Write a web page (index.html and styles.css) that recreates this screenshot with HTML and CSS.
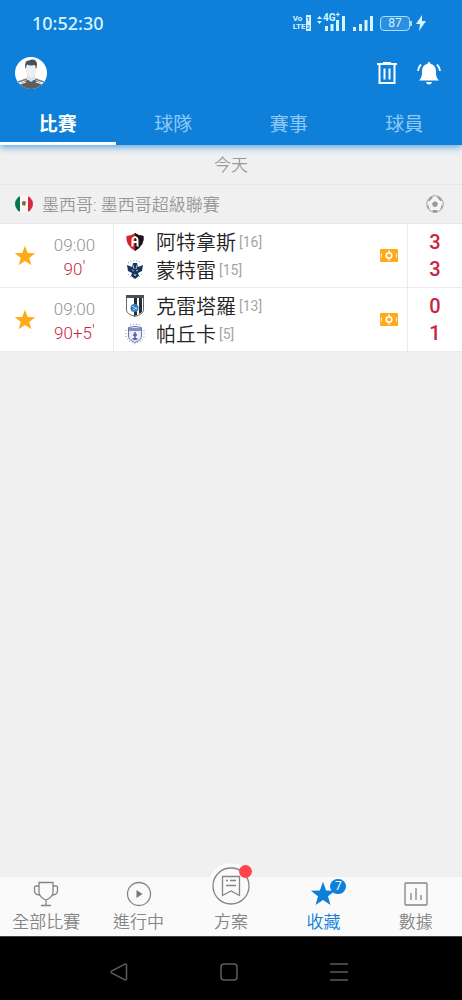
FILE: index.html
```html
<!DOCTYPE html>
<html lang="zh-Hant">

<head>
  <meta charset="utf-8">
  <meta name="viewport" content="width=device-width, initial-scale=1">
  <title>收藏</title>
  <link rel="stylesheet" href="styles.css">
</head>

<body>

  <!-- Shapes used more than once -->
  <svg class="defs" width="0" height="0">
    <symbol id="star" viewBox="0 0 24 24">
      <path d="M12 0.8l2.9 7.9 8.3.3-6.6 5.1 2.3 8.1L12 17.5l-6.9 4.7 2.3-8.1L.8 9l8.3-.3z" fill="currentColor" />
    </symbol>
    <symbol id="pitch" viewBox="0 0 18 13">
      <rect width="18" height="13" rx="1" fill="#ffa91c" />
      <path d="M1.500 4.500v4M16.500 4.500v4" fill="none" stroke="#fff" opacity=".8" />
      <circle cx="9" cy="6.500" r="2.800" fill="none" stroke="#fff" stroke-width="1.600" />
      <path d="M9 1v4M9 8v4" stroke="#fff" stroke-width="1" />
    </symbol>
  </svg>

  <header class="header">
    <div class="status-bar">
      <span class="clock">10:52:30</span>
      <div class="status-icons">
        <span class="volte"><span>Vo<i>1</i></span><span>LTE<i>2</i></span></span>
        <span class="network">
          <svg width="29" height="16" viewBox="0 0 29 16">
            <path d="M0 4l2.500-3L5 4zM0 6l2.500 3L5 6z" fill="#d7f3ff" />
            <path d="M8 11h3v5H8zM13.500 9h3v7h-3zM19 5h3v11h-3zM25 1h3v15h-3z" fill="#d7f3ff" />
          </svg>
          <span class="network-type">4G<sup>+</sup></span>
        </span>
        <svg width="22" height="16" viewBox="0 0 22 16">
          <path d="M1 12h3v4H1zM7 9h3v7H7zM12.500 5h3v11h-3zM18 1h3v15h-3z" fill="#d7f3ff" />
        </svg>
        <span class="battery">87</span>
        <svg width="10" height="16" viewBox="0 0 10 16">
          <path d="M6 0L0 9h4l-1 7 7-10H6z" fill="#d7f3ff" />
        </svg>
      </div>
    </div>

    <div class="toolbar">
      <button class="icon-button" aria-label="個人資料">
        <svg width="32" height="32" viewBox="0 0 32 32">
          <clipPath id="face"><circle cx="16" cy="16" r="16" /></clipPath>
          <g clip-path="url(#face)">
            <rect width="32" height="32" fill="#fff" />
            <path d="M3 28c3-3 6-3 9-5h8c3 2 6 2 9 5v5H3z" fill="#5d5f63" />
            <path d="M3 25l9-3M29 25l-9-3" stroke="#777a7e" stroke-width="1.500" />
            <path d="M5 27l6-2M27 27l-6-2" stroke="#f4f4f4" stroke-width="1.200" />
            <path d="M12 16h8v6l-4 3-4-3z" fill="#dfe1e3" />
            <path d="M11 8h10v6q-.5 5-5 7-4.500-2-5-7z" fill="#edf0f2" />
            <path d="M10.500 12C9.500 6 11 3 14 3.500 18 1 22 3 22 7q0 3-1 5l-1-4q-5 1-8-.5z" fill="#46515d" />
          </g>
        </svg>
      </button>
      <div class="toolbar-actions">
        <button class="icon-button" aria-label="刪除">
          <svg width="22" height="24" viewBox="0 0 22 24" fill="none" stroke="#fff" stroke-width="2">
            <path d="M1 3h20M7 2h8M3.500 3v19h15V3M8.500 7.500v11M13.500 7.500v11" />
          </svg>
        </button>
        <button class="icon-button" aria-label="通知">
          <svg width="24" height="24" viewBox="0 0 24 24">
            <path d="M12 1q1.500 0 1.500 2c4 .7 5.500 3.500 5.500 8 0 4 .5 6 3 8.500H2c2.500-2.500 3-4.500 3-8.500 0-4.500 1.500-7.300 5.500-8Q10.500 1 12 1zM9 21h6q-.5 2.500-3 2.500T9 21z" fill="#fff" />
            <path d="M4 3.500Q1.500 6 1 10M20 3.500Q22.500 6 23 10" fill="none" stroke="#fff" stroke-width="1.800" />
          </svg>
        </button>
      </div>
    </div>

    <nav class="tabs">
      <a class="tab active" href="#">比賽</a>
      <a class="tab" href="#">球隊</a>
      <a class="tab" href="#">賽事</a>
      <a class="tab" href="#">球員</a>
    </nav>
  </header>

  <main class="content">
    <h2 class="day">今天</h2>

    <div class="league">
      <svg width="18" height="18" viewBox="0 0 18 18">
        <clipPath id="flag"><circle cx="9" cy="9" r="9" /></clipPath>
        <g clip-path="url(#flag)">
          <rect width="18" height="18" fill="#f7f7f5" />
          <rect width="5" height="18" fill="#087452" />
          <rect x="13" width="5" height="18" fill="#d72840" />
        </g>
        <path d="M7 7q2-2 4 0l-.5 3L9 11l-2-1.500z" fill="#8a6a47" />
      </svg>
      <h3 class="league-name">墨西哥: 墨西哥超級聯賽</h3>
      <svg width="18" height="18" viewBox="0 0 18 18">
        <circle cx="9" cy="9" r="8.300" fill="#f4f4f4" stroke="#a5a5a5" />
        <path d="M9 6l3 2.200-1.200 3.500H7.200L6 8.200zM5 1.500l2 .8-3.500 4L2 5.500zM13 1.500l-2 .8 3.500 4 1.500-.8zM1 9.500l1.500 1 1 3.500-1 .5zM17 9.500l-1.500 1-1 3.500 1 .5zM6.500 15h5l-.5 2.500H7z" fill="#999" />
      </svg>
    </div>

    <article class="match">
      <div class="match-time">
        <button class="favorite" aria-label="收藏"><svg width="22" height="22"><use href="#star" /></svg></button>
        <div class="times">
          <time>09:00</time>
          <span class="minute">90<sup>'</sup></span>
        </div>
      </div>
      <div class="teams">
        <div class="team">
          <svg width="20" height="20" viewBox="0 0 20 20">
            <path d="M10 1q4 3 8.500 3Q20 13 10 19 0 13 1.500 4 6 4 10 1z" fill="#d2242d" />
            <path d="M10 1q4 3 8.500 3Q20 13 10 19z" fill="#171719" />
            <path d="M6.500 15V8q0-3 3.500-4 3.500 1 3.500 4v7l-2-1v-3h-3v3zM8.500 9h3V7.500q0-1.500-1.500-1.500T8.500 7.500z" fill="#fff" />
          </svg>
          <span class="team-name">阿特拿斯</span><span class="rank">[16]</span>
        </div>
        <div class="team">
          <svg width="20" height="20" viewBox="0 0 20 20">
            <path d="M2 5l5 2 1-4h4l1 4 5-2-1 6-4 2 1 3-4 3-4-3 1-3-4-2z" fill="#18345d" />
            <path d="M8 5l1 4M12 5l-1 4M7 10l2 1M13 10l-2 1M9 14l1 2 1-2" stroke="#aab9cd" fill="none" />
            <path d="M3 3l4-2h6l4 2M3 14l4 4M17 14l-4 4" fill="none" stroke="#7889a0" stroke-dasharray="1 2" />
          </svg>
          <span class="team-name">蒙特雷</span><span class="rank">[15]</span>
        </div>
      </div>
      <svg class="live" width="18" height="13"><use href="#pitch" /></svg>
      <div class="scores"><span>3</span><span>3</span></div>
    </article>

    <article class="match">
      <div class="match-time">
        <button class="favorite" aria-label="收藏"><svg width="22" height="22"><use href="#star" /></svg></button>
        <div class="times">
          <time>09:00</time>
          <span class="minute">90+5<sup>'</sup></span>
        </div>
      </div>
      <div class="teams">
        <div class="team">
          <svg width="20" height="24" viewBox="0 0 20 24">
            <path d="M1.500 2h17v14q0 4-8.500 6.500-8.500-2.500-8.500-6.500z" fill="#fff" stroke="#656970" />
            <path d="M1 1h18v3H1z" fill="#4b4e54" />
            <path d="M9 4h3v17l-3 1zM14 4h3v14l-3 2z" fill="#252d39" />
            <circle cx="9.500" cy="14" r="4" fill="#347dbd" />
            <path d="M7 12l5 3M8 16l4-2" stroke="#b9dbf3" />
          </svg>
          <span class="team-name">克雷塔羅</span><span class="rank">[13]</span>
        </div>
        <div class="team">
          <svg width="20" height="22" viewBox="0 0 20 22">
            <path d="M3.500 4.500q6.500-2 13 0V13q0 4-6.500 6.500Q3.500 17 3.500 13z" fill="#e9edf9" stroke="#6976ad" />
            <path d="M4 5h12v3H4z" fill="#8490bd" />
            <path d="M10 9v8M8 12h4M7.500 16h5" stroke="#4d5b9d" stroke-width="1.500" />
            <path d="M5 2l5-1 5 1M1 7v7l3 4 6 3 6-3 3-4V7" fill="none" stroke="#8490bd" stroke-dasharray="1 2" />
          </svg>
          <span class="team-name">帕丘卡</span><span class="rank">[5]</span>
        </div>
      </div>
      <svg class="live" width="18" height="13"><use href="#pitch" /></svg>
      <div class="scores"><span>0</span><span>1</span></div>
    </article>
  </main>

  <footer class="footer">
    <nav class="bottom-nav">
      <a class="nav-item" href="#">
        <svg class="nav-icon" width="26" height="26" viewBox="0 0 26 26" fill="none" stroke="#858585" stroke-width="1.300">
          <path d="M6 1.500h14V11q0 5-7 8-7-3-7-8zM6 5H3q-1.500 0-1.500 1.500V10q0 3.500 5 4M20 5h3q1.500 0 1.500 1.500V10q0 3.500-5 4M13 19v5.500M8 24.500h10" />
        </svg>
        <span>全部比賽</span>
      </a>
      <a class="nav-item" href="#">
        <svg class="nav-icon" width="26" height="26" viewBox="0 0 26 26">
          <circle cx="13" cy="13" r="11.500" fill="none" stroke="#858585" stroke-width="1.300" />
          <path d="M10.500 9l6 4-6 4z" fill="#777" />
        </svg>
        <span>進行中</span>
      </a>
      <a class="nav-item" href="#">
        <span class="plan">
          <svg width="38" height="38" viewBox="0 0 38 38" fill="none" stroke="#858585" stroke-width="1.300">
            <circle cx="19" cy="19" r="18" />
            <path d="M10.500 9.500h17v19L19 24l-8.500 4.500zM14 13.500h2M18 13.500h6M14 18.500h10" />
          </svg>
          <span class="dot"></span>
        </span>
        <span>方案</span>
      </a>
      <a class="nav-item active" href="#">
        <span class="nav-icon">
          <svg width="26" height="26"><use href="#star" /></svg>
          <span class="count">7</span>
        </span>
        <span>收藏</span>
      </a>
      <a class="nav-item" href="#">
        <svg class="nav-icon" width="26" height="26" viewBox="0 0 26 26" fill="none" stroke="#858585" stroke-width="1.300">
          <rect x="2" y="2" width="22" height="22" rx="1" />
          <path d="M8 12v7M13 7v12M18 14v5" />
        </svg>
        <span>數據</span>
      </a>
    </nav>

    <div class="system-nav">
      <button class="icon-button" aria-label="返回">
        <svg width="20" height="20" viewBox="0 0 20 20"><path d="M17.500 2.500v15q-1 1-2 0L2.500 11q-1-1 0-2l13-6.500q1-1 2 0z" fill="none" stroke="#5c5c5c" stroke-width="1.500" /></svg>
      </button>
      <button class="icon-button" aria-label="主畫面">
        <svg width="20" height="20" viewBox="0 0 20 20"><rect x="2" y="2" width="16" height="16" rx="3" fill="none" stroke="#5c5c5c" stroke-width="1.500" /></svg>
      </button>
      <button class="icon-button" aria-label="最近使用">
        <svg width="20" height="20" viewBox="0 0 20 20"><path d="M1 2h18M1 10h18M1 18h18" stroke="#5c5c5c" stroke-width="1.500" /></svg>
      </button>
    </div>
  </footer>

</body>

</html>
```

FILE: styles.css
```css
* {
  box-sizing: border-box;
}

body {
  margin: 0;
  min-height: 100vh;
  display: flex;
  flex-direction: column;
  background-color: #f0f0f0;
  color: #222;
  font-family: Roboto, "Noto Sans CJK TC", sans-serif;
}

a {
  color: inherit;
  text-decoration: none;
}

button {
  padding: 0;
  border: 0;
  background: none;
  cursor: pointer;
}

svg {
  display: block;
  flex-shrink: 0;
}

.defs {
  position: absolute;
}

/* Blue header */
.header {
  background-color: #0f80da;
  color: white;
  box-shadow: 0 2px 7px rgba(15, 128, 218, 0.7);
}

.status-bar {
  display: flex;
  justify-content: space-between;
  align-items: center;
  height: 46px;
  padding: 0 36px 0 32px;
  color: #d7f3ff;
}

.clock {
  font-family: "Noto Sans", sans-serif;
  font-size: 18px;
  font-weight: 500;
}

.status-icons {
  display: flex;
  align-items: center;
  gap: 6px;
}

.volte {
  display: flex;
  flex-direction: column;
  font-size: 8px;
  font-weight: 700;
  line-height: 8px;
}

.volte span {
  display: flex;
  justify-content: space-between;
}

.volte i {
  padding: 0 1px;
  background-color: #d7f3ff;
  color: #0f80da;
  font-size: 6px;
  font-style: normal;
}

.network {
  position: relative;
}

.network-type {
  position: absolute;
  top: -3px;
  left: 6px;
  font-size: 10px;
  font-weight: 700;
  line-height: 12px;
}

.network-type sup {
  font-size: 8px;
  line-height: 0;
}

.battery {
  position: relative;
  width: 30px;
  border: 1px solid #a9ddfb;
  border-radius: 4px;
  background-color: #2b8fe0;
  font-size: 12px;
  line-height: 13px;
  text-align: center;
}

.battery::after {
  content: "";
  position: absolute;
  top: 4px;
  right: -3px;
  width: 2px;
  height: 5px;
  background-color: #a9ddfb;
}

.toolbar {
  display: flex;
  justify-content: space-between;
  align-items: center;
  height: 54px;
  padding: 0 21px 0 15px;
}

.toolbar-actions {
  display: flex;
  gap: 19px;
}

.tabs {
  display: flex;
}

.tab {
  flex: 1;
  padding-top: 8px;
  border-bottom: 3px solid transparent;
  color: #8fc9f6;
  font-size: 19px;
  line-height: 34px;
  text-align: center;
}

.tab.active {
  border-color: white;
  color: white;
  font-weight: 700;
}

/* Match list */
.day {
  margin: 0;
  padding: 9px 0 7px;
  border-bottom: 1px solid #e6e6e6;
  color: #999;
  font-size: 17px;
  font-weight: 350;
  line-height: 23px;
  text-align: center;
}

.content {
  flex: 1;
}

.league {
  display: flex;
  align-items: center;
  gap: 9px;
  padding: 7px 18px 7px 15px;
  border-bottom: 1px solid #e6e6e6;
}

.league-name {
  flex: 1;
  margin: 0;
  padding-top: 2px;
  color: #999;
  font-size: 17px;
  font-weight: 350;
  line-height: 22px;
}

.match {
  display: flex;
  align-items: center;
  height: 64px;
  border-bottom: 1px solid #ececec;
  background-color: white;
}

.match-time {
  display: flex;
  align-items: center;
  align-self: stretch;
  width: 114px;
  padding-left: 14px;
  border-right: 1px solid #ececec;
}

.favorite {
  color: #ffaa17;
}

.times {
  flex: 1;
  display: flex;
  flex-direction: column;
  padding-top: 2px;
  color: #929292;
  font-size: 17px;
  font-weight: 350;
  line-height: 24px;
  text-align: center;
}

.minute {
  color: #cc2440;
}

.minute sup {
  font-size: 17px;
  line-height: 0;
  vertical-align: 3px;
}

.teams {
  flex: 1;
  padding-left: 11px;
}

.team {
  display: flex;
  align-items: center;
  height: 28px;
}

.team-name {
  margin: 0 3px 0 11px;
  padding-top: 2px;
  font-size: 20px;
  font-weight: 350;
  line-height: 26px;
}

.rank {
  padding-top: 1px;
  color: #a5a5a5;
  font-size: 14px;
}

.scores {
  display: flex;
  flex-direction: column;
  justify-content: center;
  align-self: stretch;
  width: 55px;
  margin-left: 9px;
  border-left: 1px solid #ececec;
  color: #cc2440;
  font-size: 20px;
  font-weight: 500;
  line-height: 27px;
  text-align: center;
}

/* Bottom navigation */
.bottom-nav {
  display: flex;
  align-items: flex-end;
  height: 59px;
  background-color: #fafafa;
}

.nav-item {
  flex: 1;
  display: flex;
  flex-direction: column;
  align-items: center;
  color: #858585;
  font-size: 17px;
  font-weight: 350;
  line-height: 28px;
}

.nav-item.active {
  color: #0f80da;
}

.nav-icon {
  position: relative;
  margin-bottom: 1px;
}

.plan {
  position: relative;
  padding: 4px 4px 3px;
  border-radius: 50%;
  background-color: #fafafa;
}

.dot {
  position: absolute;
  top: 2px;
  right: 2px;
  width: 13px;
  height: 13px;
  border-radius: 50%;
  background-color: #ff454b;
}

.count {
  position: absolute;
  top: -2px;
  right: -10px;
  width: 16px;
  border-radius: 8px;
  background-color: #0f80da;
  color: white;
  font-size: 12px;
  font-weight: 400;
  line-height: 15px;
  text-align: center;
}

.system-nav {
  display: flex;
  justify-content: center;
  align-items: center;
  gap: 90px;
  height: 64px;
  padding: 6px 4px 0 0;
  border-top: 1px solid #444;
  background-color: black;
}
```
